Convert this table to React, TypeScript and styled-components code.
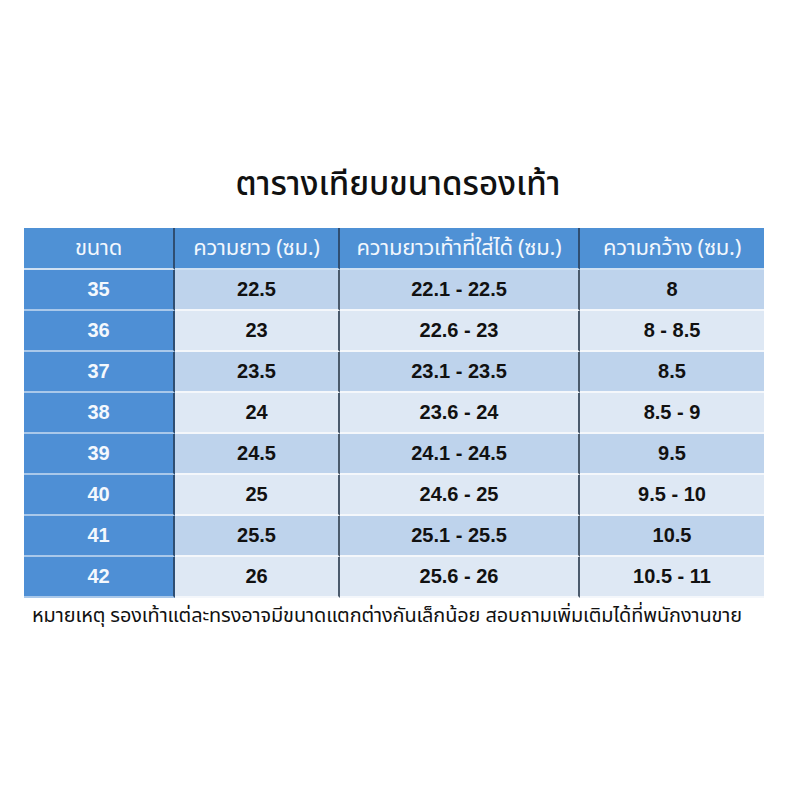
import styled, { createGlobalStyle } from 'styled-components';

const GlobalStyle = createGlobalStyle`
  html, body {
    margin: 0;
    padding: 0;
    background: #ffffff;
  }
`;

const thai = `"Noto Sans Thai", "Noto Sans Thai Looped", "Noto Sans", "Liberation Sans", sans-serif`;

const Page = styled.main`
  width: 796px;
  height: 796px;
  box-sizing: border-box;
  padding: 163px 24px 0;
  display: flex;
  flex-direction: column;
  align-items: flex-start;
  font-family: ${thai};
`;

const Title = styled.h1`
  align-self: center;
  margin: 0;
  height: 65px;
  font-size: 33px;
  font-weight: 500;
  color: #111;
  line-height: 44px;
`;

const Table = styled.div`
  width: 740px;
  display: grid;
  grid-template-columns: 151px 165px 240px 184px;
`;

const HeadCell = styled.div<{ $last?: boolean }>`
  height: 42px;
  display: flex;
  align-items: center;
  justify-content: center;
  background: #4f91d5;
  color: #f2f7fd;
  font-size: 22px;
  letter-spacing: -0.3px;
  white-space: nowrap;
  border-right: ${(p) => (p.$last ? 'none' : '2px solid #2f4e72')};
  border-bottom: 2px solid #cfe0f2;
  box-sizing: border-box;
`;

const SizeCell = styled.div`
  height: 41px;
  display: flex;
  align-items: center;
  justify-content: center;
  background: #4e8fd5;
  color: #f4f8fd;
  font-family: "Liberation Sans", Arial, sans-serif;
  font-weight: 700;
  font-size: 20px;
  border-right: 2px solid #2f4e72;
  border-bottom: 2px solid #a9c8ea;
  box-sizing: border-box;
`;

const ValueCell = styled.div<{ $odd: boolean; $last?: boolean }>`
  height: 41px;
  display: flex;
  align-items: center;
  justify-content: center;
  background: ${(p) => (p.$odd ? '#bed3ec' : '#dee8f4')};
  color: #111;
  font-family: "Liberation Sans", Arial, sans-serif;
  font-weight: 700;
  font-size: 20px;
  border-right: ${(p) => (p.$last ? 'none' : '2px solid #4a5a6c')};
  border-bottom: 2px solid #f4f7fb;
  box-sizing: border-box;
`;

const Note = styled.p`
  margin: 3px 0 0 8px;
  font-size: 19.9px;
  letter-spacing: -0.1px;
  color: #111;
  white-space: nowrap;
`;

const headers = ['ขนาด', 'ความยาว (ซม.)', 'ความยาวเท้าที่ใส่ได้ (ซม.)', 'ความกว้าง (ซม.)'];

const rows: [string, string, string, string][] = [
  ['35', '22.5', '22.1 - 22.5', '8'],
  ['36', '23', '22.6 - 23', '8 - 8.5'],
  ['37', '23.5', '23.1 - 23.5', '8.5'],
  ['38', '24', '23.6 - 24', '8.5 - 9'],
  ['39', '24.5', '24.1 - 24.5', '9.5'],
  ['40', '25', '24.6 - 25', '9.5 - 10'],
  ['41', '25.5', '25.1 - 25.5', '10.5'],
  ['42', '26', '25.6 - 26', '10.5 - 11'],
];

export default function App() {
  return (
    <>
      <GlobalStyle />
      <Page>
        <Title>ตารางเทียบขนาดรองเท้า</Title>
        <Table>
          {headers.map((h, i) => (
            <HeadCell key={h} $last={i === headers.length - 1}>{h}</HeadCell>
          ))}
          {rows.flatMap((r, ri) => [
            <SizeCell key={r[0]}>{r[0]}</SizeCell>,
            <ValueCell key={r[0] + 'a'} $odd={ri % 2 === 0}>{r[1]}</ValueCell>,
            <ValueCell key={r[0] + 'b'} $odd={ri % 2 === 0}>{r[2]}</ValueCell>,
            <ValueCell key={r[0] + 'c'} $odd={ri % 2 === 0} $last>{r[3]}</ValueCell>,
          ])}
        </Table>
        <Note>หมายเหตุ รองเท้าแต่ละทรงอาจมีขนาดแตกต่างกันเล็กน้อย สอบถามเพิ่มเติมได้ที่พนักงานขาย</Note>
      </Page>
    </>
  );
}
